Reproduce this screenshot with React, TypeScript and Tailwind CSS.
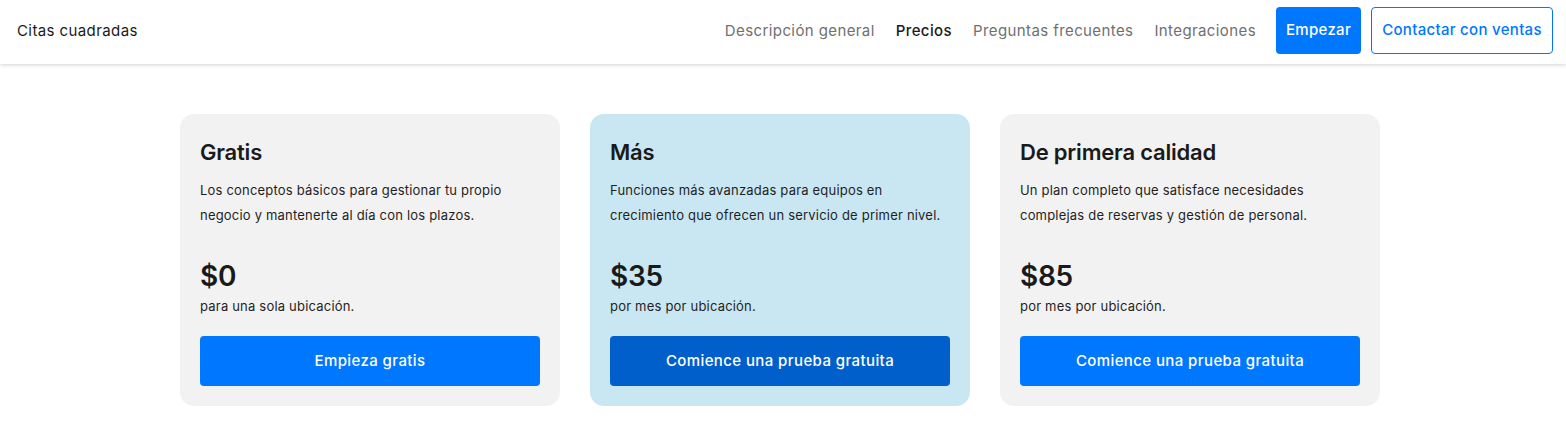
import React from "react";

const plans = [
  {
    title: "Gratis",
    desc: ["Los conceptos básicos para gestionar tu propio", "negocio y mantenerte al día con los plazos."],
    price: "$0",
    sub: "para una sola ubicación.",
    cta: "Empieza gratis",
    featured: false,
  },
  {
    title: "Más",
    desc: ["Funciones más avanzadas para equipos en", "crecimiento que ofrecen un servicio de primer nivel."],
    price: "$35",
    sub: "por mes por ubicación.",
    cta: "Comience una prueba gratuita",
    featured: true,
  },
  {
    title: "De primera calidad",
    desc: ["Un plan completo que satisface necesidades", "complejas de reservas y gestión de personal."],
    price: "$85",
    sub: "por mes por ubicación.",
    cta: "Comience una prueba gratuita",
    featured: false,
  },
];

export default function App() {
  return (
    <div className="min-h-[421px] bg-white text-[#1a1a1a]" style={{ fontFamily: "Inter, 'Noto Sans', sans-serif" }}>
      <header className="flex h-[64px] items-center justify-between bg-white pl-[17px] pr-[13px] shadow-[0_1px_4px_rgba(0,0,0,0.18)]">
        <div className="pb-[2px] text-[15px] tracking-[0.4px] text-[#1a1a1a]">Citas cuadradas</div>
        <nav className="flex items-center pb-[3px]">
          <a className="mr-[21px] pt-[1px] text-[15px] tracking-[0.4px] text-[#707070]">Descripción general</a>
          <a className="mr-[21px] pt-[1px] text-[15px] font-medium tracking-[0.4px] text-[#1a1a1a]">Precios</a>
          <a className="mr-[21px] pt-[1px] text-[15px] tracking-[0.4px] text-[#707070]">Preguntas frecuentes</a>
          <a className="mr-[20px] pt-[1px] text-[15px] tracking-[0.4px] text-[#707070]">Integraciones</a>
          <button className="mr-[10px] flex h-[47px] w-[85px] items-center justify-center rounded-[4px] bg-[#0077ff] text-[15px] font-medium tracking-[0.3px] text-white">
            Empezar
          </button>
          <button className="flex h-[47px] w-[182px] items-center justify-center rounded-[4px] border border-[#0077ff] bg-white text-[15px] font-medium tracking-[0.3px] text-[#0077ff]">
            Contactar con ventas
          </button>
        </nav>
      </header>
      <main className="mt-[50px] flex gap-[30px] pl-[180px]">
        {plans.map((p) => (
          <div
            key={p.title}
            className={`flex h-[292px] w-[380px] flex-col rounded-[14px] px-[20px] pt-[21px] ${p.featured ? "bg-[#c9e7f2]" : "bg-[#f2f2f2]"}`}
          >
            <h2 className="text-[22px] font-semibold leading-[34px] tracking-[-0.2px]">{p.title}</h2>
            <p className="mt-[9px] text-[13px] leading-[25px] tracking-[0.2px] text-[#1f1f1f]">
              {p.desc[0]}
              <br />
              {p.desc[1]}
            </p>
            <div className="mt-[30px] text-[28px] font-semibold leading-[36px] tracking-[-0.3px]">{p.price}</div>
            <div className="mt-[2px] text-[13px] leading-[20px] tracking-[0.2px] text-[#1f1f1f]">{p.sub}</div>
            <button
              className={`mt-[20px] flex h-[50px] w-full items-center justify-center rounded-[4px] text-[15px] font-medium tracking-[0.4px] text-white ${p.featured ? "bg-[#005fcb]" : "bg-[#0077ff]"}`}
            >
              {p.cta}
            </button>
          </div>
        ))}
      </main>
    </div>
  );
}
